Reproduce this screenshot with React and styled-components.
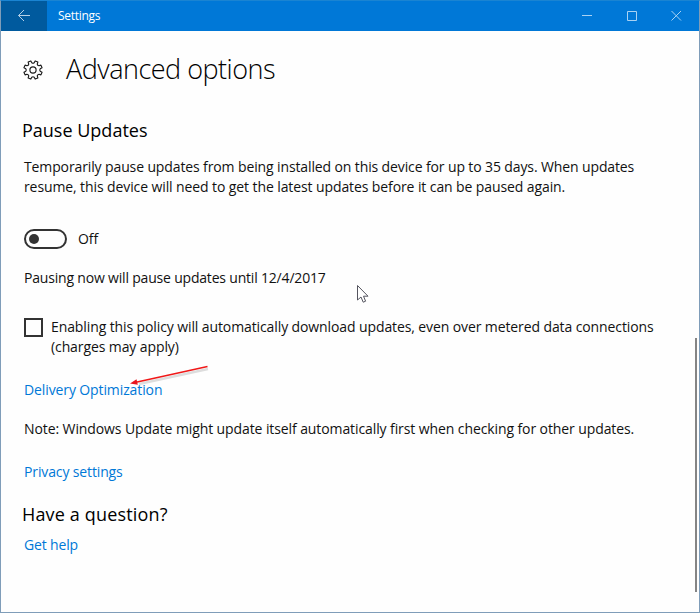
import React from "react";
import styled, { createGlobalStyle } from "styled-components";

const GlobalStyle = createGlobalStyle`
  body { margin: 0; background: #fefefe; }
  * { box-sizing: border-box; }
`;

const Window = styled.div`
  position: relative;
  width: 700px;
  height: 613px;
  display: flex;
  flex-direction: column;
  overflow: hidden;
  background: #fefefe;
  border: 1px solid #7f9db9;
  border-top-color: #1a84d2;
  font-family: "Open Sans", "Noto Sans", sans-serif;
  color: #111;
`;

const TitleBar = styled.header`
  display: flex;
  flex: none;
  height: 30px;
  margin-right: -1px;
  background: #0078d7;
  color: #fff;
`;

const BackButton = styled.button`
  width: 46px;
  height: 30px;
  padding: 0;
  border: 0;
  background: #005a9e;
  svg { display: block; }
`;

const WindowTitle = styled.span`
  flex: 1;
  padding-left: 11px;
  font-size: 12px;
  line-height: 30px;
  letter-spacing: ${(p) => p.$track}px;
`;

const Controls = styled.div`
  flex: none;
  width: 135px;
  svg { display: block; }
`;

const Content = styled.main`
  display: flex;
  flex-direction: column;
  align-items: flex-start;
  padding: 19px 0 0 23px;
`;

const Heading = styled.div`
  display: flex;
  align-items: center;
  height: 38px;
  gap: 22px;
  svg { flex: none; margin: 1px 1px 0 -1px; }
`;

const PageTitle = styled.h1`
  margin: 0;
  font-size: 27px;
  font-weight: 300;
  line-height: 38px;
  white-space: nowrap;
  letter-spacing: ${(p) => p.$track}px;
  color: #000;
`;

const SectionTitle = styled.h2`
  margin: ${(p) => p.$top}px 0 0 -2px;
  font-size: 18px;
  font-weight: 400;
  line-height: 26px;
  white-space: nowrap;
  letter-spacing: ${(p) => p.$track}px;
  color: #000;
`;

const Text = styled.p`
  margin: ${(p) => p.$top || 0}px 0 0;
  font-size: 14px;
  line-height: 20px;
  white-space: nowrap;
  letter-spacing: ${(p) => p.$track}px;
`;

const Link = styled(Text).attrs({ as: "a" })`
  display: block;
  color: #0078d7;
`;

const ToggleRow = styled.div`
  display: flex;
  align-items: center;
  gap: 11px;
  height: 20px;
  margin-top: 32px;
`;

const Toggle = styled.span`
  display: flex;
  align-items: center;
  width: 43px;
  height: 20px;
  padding-left: 3px;
  border: 2px solid #333;
  border-radius: 10px;
  &::before {
    content: "";
    width: 10px;
    height: 10px;
    border-radius: 50%;
    background: #333;
  }
`;

const CheckRow = styled.div`
  display: flex;
  gap: 8px;
  margin-top: 29px;
`;

const Checkbox = styled.span`
  width: 19px;
  height: 19px;
  margin-top: 1px;
  border: 2px solid #333;
`;

const ScrollThumb = styled.div`
  position: absolute;
  right: 2px;
  top: 337px;
  width: 2px;
  height: 254px;
  background: #858585;
`;

const Overlay = styled.svg`
  position: absolute;
  left: ${(p) => p.$x}px;
  top: ${(p) => p.$y}px;
`;

const at = (r, deg) => {
  const a = (deg * Math.PI) / 180;
  return `${(10 + r * Math.cos(a)).toFixed(2)} ${(10 + r * Math.sin(a)).toFixed(2)}`;
};
const gearPath =
  Array.from({ length: 8 }, (_, i) => {
    const c = 22.5 + i * 45;
    return `${i ? "L" : "M"}${at(7.3, c - 13)} L${at(9.3, c - 9)} L${at(9.3, c + 9)} L${at(7.3, c + 13)} Q${at(6.3, c + 22.5)} ${at(7.3, c + 32)}`;
  }).join(" ") + "Z";

function Gear() {
  return (
    <svg width="20" height="20" viewBox="0 0 20 20" fill="none" stroke="#1c1c1c" strokeWidth="1.15" strokeLinejoin="round">
      <path d={gearPath} />
      <circle cx="10" cy="10" r="3.1" />
    </svg>
  );
}

export default function App() {
  return (
    <Window>
      <GlobalStyle />
      <TitleBar>
        <BackButton aria-label="Back">
          <svg width="46" height="30" viewBox="1 0 46 30" fill="none" stroke="#b5d0e6" strokeWidth="1">
            <path d="M18.5 14.5H30M24 9L18.5 14.5L24 20" />
          </svg>
        </BackButton>
        <WindowTitle $track={-0.3}>Settings</WindowTitle>
        <Controls>
          <svg width="135" height="30" fill="none" stroke="#a9d2f3" strokeWidth="1">
            <path d="M17 14.5H27M62.5 10.5H71.5V19.5H62.5ZM106.5 10L116 19.5M116 10L106.5 19.5" />
          </svg>
        </Controls>
      </TitleBar>
      <Content>
        <Heading>
          <Gear />
          <PageTitle $track={-0.5}>Advanced options</PageTitle>
        </Heading>
        <SectionTitle $top={29} $track={0}>Pause Updates</SectionTitle>
        <Text $top={14} $track={-0.12}>Temporarily pause updates from being installed on this device for up to 35 days. When updates</Text>
        <Text $track={-0.1}>resume, this device will need to get the latest updates before it can be paused again.</Text>
        <ToggleRow>
          <Toggle />
          <Text $track={-0.1}>Off</Text>
        </ToggleRow>
        <Text $top={19} $track={-0.19}>Pausing now will pause updates until 12/4/2017</Text>
        <CheckRow>
          <Checkbox />
          <div>
            <Text $track={-0.105}>Enabling this policy will automatically download updates, even over metered data connections</Text>
            <Text $track={-0.1}>(charges may apply)</Text>
          </div>
        </CheckRow>
        <Link $top={23} $track={-0.11}>Delivery Optimization</Link>
        <Text $top={19} $track={-0.097}>Note: Windows Update might update itself automatically first when checking for other updates.</Text>
        <Link $top={23} $track={-0.13}>Privacy settings</Link>
        <SectionTitle $top={19} $track={0.16}>Have a question?</SectionTitle>
        <Link $top={8} $track={-0.15}>Get help</Link>
      </Content>
      <ScrollThumb />
      <Overlay $x={355} $y={283} width="16" height="22" viewBox="0 0 16 22">
        <path d="M1.5 1.5V16L5 13L7.2 18.2L9.6 17.2L7.5 12.2H12Z" fill="#fff" stroke="#55555f" strokeWidth="1" />
      </Overlay>
      <Overlay $x={126} $y={362} width="86" height="28" viewBox="0 0 86 28">
        <path d="M12 21L81 6" stroke="#000" strokeOpacity=".13" strokeWidth="2.6" />
        <path d="M9 19.2L80.5 3.5" stroke="#f01818" strokeWidth="1.5" />
        <path d="M3 20.5L9.5 16.2L10.8 21.8Z" fill="#e8141c" />
      </Overlay>
    </Window>
  );
}
